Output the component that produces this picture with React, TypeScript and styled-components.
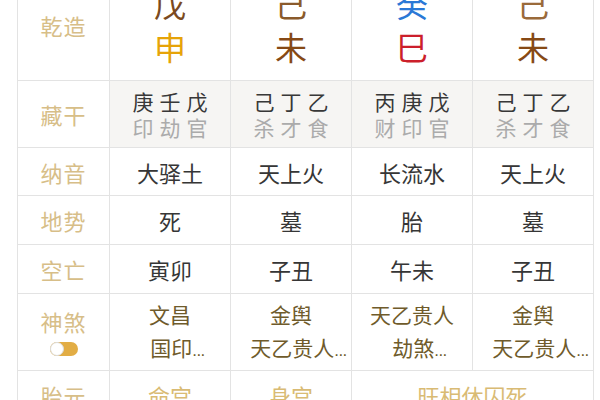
import React from "react";
import styled, { createGlobalStyle } from "styled-components";

const GlobalStyle = createGlobalStyle`
  html, body { margin: 0; padding: 0; background: #ffffff; }
  body { font-family: "Noto Sans CJK SC", "Noto Sans", sans-serif; }
  * { box-sizing: border-box; }
`;

const Page = styled.div`
  width: 600px;
  height: 400px;
  overflow: hidden;
  padding-left: 17px;
  background: #ffffff;
`;

const Grid = styled.div`
  display: grid;
  grid-template-columns: 91px repeat(4, 120px);
  grid-template-rows: 110px 66px 47px 48px 48px 76px 48px;
  gap: 1px;
  width: max-content;
  background: #e3e3e3;
  border: 1px solid #e3e3e3;
  margin-top: -31px;
`;

const Cell = styled.div<{ $shade?: boolean; $span?: number }>`
  background: ${(p) => (p.$shade ? "#f6f5f3" : "#ffffff")};
  display: flex;
  flex-direction: column;
  align-items: center;
  justify-content: center;
  grid-column: ${(p) => (p.$span ? `span ${p.$span}` : "auto")};
  white-space: nowrap;
`;

const Label = styled.div`
  font-size: 22px;
  line-height: 26px;
  color: #d7be88;
  letter-spacing: 1px;
`;

const Pillar = styled.div<{ $color: string }>`
  font-size: 32px;
  line-height: 43px;
  color: ${(p) => p.$color};
`;

const CharRow = styled.div<{ $muted?: boolean }>`
  display: flex;
  gap: 6px;
  font-size: 21px;
  line-height: 26px;
  color: ${(p) => (p.$muted ? "#ababab" : "#383838")};
`;

const Text = styled.div`
  font-size: 22px;
  line-height: 26px;
  color: #363636;
`;

const Shen = styled.div`
  font-size: 21px;
  line-height: 33px;
  color: #6f5b2b;
`;

const More = styled.span`
  font-family: "Liberation Sans", sans-serif;
  font-size: 17px;
  margin-right: -15px;
  letter-spacing: -0.5px;
`;

const Gold = styled.div`
  font-size: 22px;
  line-height: 26px;
  color: #d9bb74;
`;

const Toggle = styled.div`
  display: flex;
  align-items: center;
  width: 28px;
  height: 14px;
  margin-top: 8px;
  border-radius: 7px;
  background: #e2ad45;
`;

const Knob = styled.div`
  width: 14px;
  height: 14px;
  border-radius: 50%;
  background: #ffffff;
  border: 1px solid #dcdcdc;
`;

const pillars = [
  { stem: "戊", stemColor: "#7b4a20", branch: "申", branchColor: "#e6a308" },
  { stem: "己", stemColor: "#8a5a2b", branch: "未", branchColor: "#864915" },
  { stem: "癸", stemColor: "#2a78d6", branch: "巳", branchColor: "#cc1f2b" },
  { stem: "己", stemColor: "#9a6a3a", branch: "未", branchColor: "#864915" },
];

const hidden = [
  { stems: "庚壬戊", gods: "印劫官" },
  { stems: "己丁乙", gods: "杀才食" },
  { stems: "丙庚戊", gods: "财印官" },
  { stems: "己丁乙", gods: "杀才食" },
];

const nayin = ["大驿土", "天上火", "长流水", "天上火"];
const dishi = ["死", "墓", "胎", "墓"];
const kong = ["寅卯", "子丑", "午未", "子丑"];
const shensha = [
  ["文昌", "国印"],
  ["金舆", "天乙贵人"],
  ["天乙贵人", "劫煞"],
  ["金舆", "天乙贵人"],
];

const Chars: React.FC<{ text: string; muted?: boolean }> = ({ text, muted }) => (
  <CharRow $muted={muted}>
    {text.split("").map((c, i) => (
      <span key={i}>{c}</span>
    ))}
  </CharRow>
);

export default function App() {
  return (
    <Page>
      <GlobalStyle />
      <Grid>
        <Cell>
          <Label>乾造</Label>
        </Cell>
        {pillars.map((p, i) => (
          <Cell key={`p${i}`}>
            <Pillar $color={p.stemColor}>{p.stem}</Pillar>
            <Pillar $color={p.branchColor}>{p.branch}</Pillar>
          </Cell>
        ))}

        <Cell>
          <Label>藏干</Label>
        </Cell>
        {hidden.map((h, i) => (
          <Cell key={`h${i}`} $shade>
            <Chars text={h.stems} />
            <Chars text={h.gods} muted />
          </Cell>
        ))}

        <Cell>
          <Label>纳音</Label>
        </Cell>
        {nayin.map((t, i) => (
          <Cell key={`n${i}`}>
            <Text>{t}</Text>
          </Cell>
        ))}

        <Cell>
          <Label>地势</Label>
        </Cell>
        {dishi.map((t, i) => (
          <Cell key={`d${i}`}>
            <Text>{t}</Text>
          </Cell>
        ))}

        <Cell>
          <Label>空亡</Label>
        </Cell>
        {kong.map((t, i) => (
          <Cell key={`k${i}`}>
            <Text>{t}</Text>
          </Cell>
        ))}

        <Cell>
          <Label>神煞</Label>
          <Toggle>
            <Knob />
          </Toggle>
        </Cell>
        {shensha.map((s, i) => (
          <Cell key={`s${i}`}>
            <Shen>{s[0]}</Shen>
            <Shen>
              {s[1]}
              <More>...</More>
            </Shen>
          </Cell>
        ))}

        <Cell>
          <Label>胎元</Label>
        </Cell>
        <Cell>
          <Gold>命宫</Gold>
        </Cell>
        <Cell>
          <Gold>身宫</Gold>
        </Cell>
        <Cell $span={2}>
          <Gold>旺相休囚死</Gold>
        </Cell>
      </Grid>
    </Page>
  );
}
